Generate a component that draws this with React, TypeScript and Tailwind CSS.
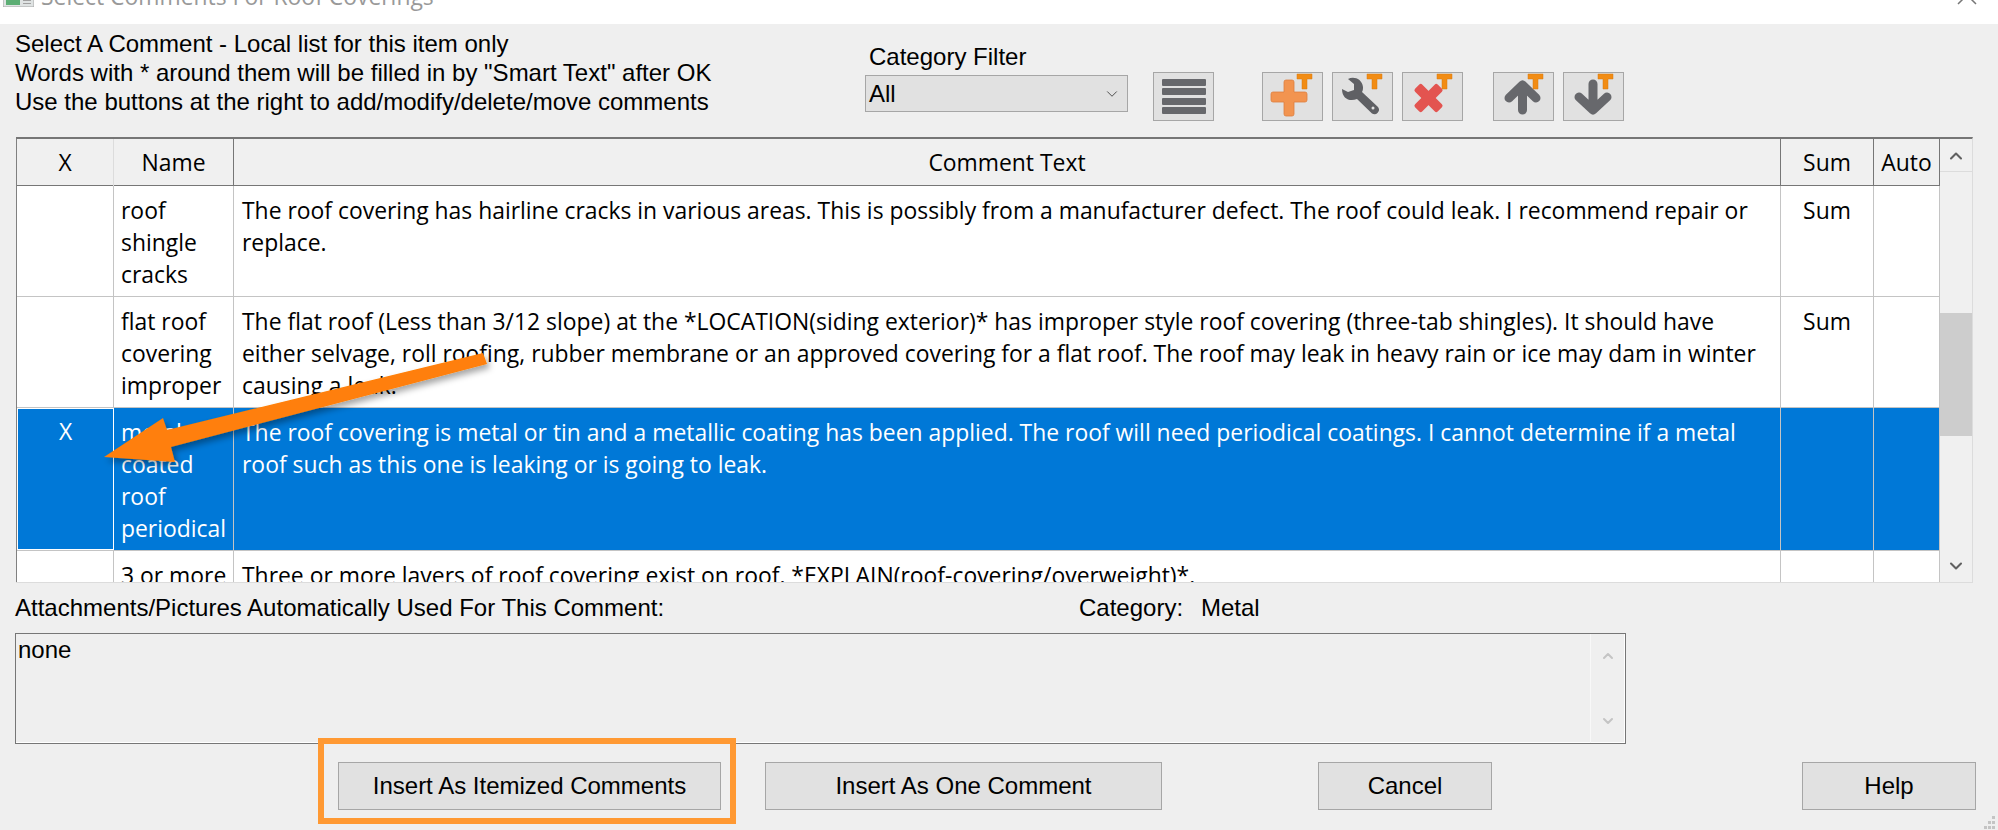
import { ChevronDown, ChevronUp } from "lucide-react";

// Comment picker dialog, table rows carry their own heights so the list clips like the real grid.
const UI_FONT = "font-['Liberation_Sans',Arial,sans-serif]";
const GRID_FONT = "font-['Open_Sans','Noto_Sans',sans-serif]";

interface Row {
  mark?: string;
  name: string[];
  text: string[];
  sum?: string;
  height: string;
  selected?: boolean;
}

const ROWS: Row[] = [
  {
    name: ["roof", "shingle", "cracks"],
    text: [
      "The roof covering has hairline cracks in various areas. This is possibly from a manufacturer defect. The roof could leak. I recommend repair or",
      "replace.",
    ],
    sum: "Sum",
    height: "h-[111px]",
  },
  {
    name: ["flat roof", "covering", "improper"],
    text: [
      "The flat roof (Less than 3/12 slope) at the *LOCATION(siding exterior)* has improper style roof covering (three-tab shingles). It should have",
      "either selvage, roll roofing, rubber membrane or an approved covering for a flat roof. The roof may leak in heavy rain or ice may dam in winter",
      "causing a leak.",
    ],
    sum: "Sum",
    height: "h-[111px]",
  },
  {
    mark: "X",
    name: ["metal", "coated", "roof", "periodical"],
    text: [
      "The roof covering is metal or tin and a metallic coating has been applied. The roof will need periodical coatings. I cannot determine if a metal",
      "roof such as this one is leaking or is going to leak.",
    ],
    height: "h-[143px]",
    selected: true,
  },
  {
    name: ["3 or more", "layers"],
    text: ["Three or more layers of roof covering exist on roof. *EXPLAIN(roof-covering/overweight)*."],
    height: "h-[111px]",
  },
];

const COLS = "grid grid-cols-[97px_120px_1547px_93px_66px]";

function ToolIcon({ children }: { children: React.ReactNode }) {
  return (
    <button className="h-[49px] w-[61px] shrink-0 border border-[#a6a6a6] bg-[#e1e1e1]">
      <svg viewBox="0 0 61 49" className="-m-[1px] block h-[49px] w-[61px]">
        {children}
        <path d="M35 2h15v5h-5v10h-5V7h-5z" fill="#f28c13" stroke="#d67a10" strokeWidth="0.5" />
      </svg>
    </button>
  );
}

function DialogButton({ label, className }: { label: string; className: string }) {
  return (
    <button className={`h-[48px] shrink-0 border border-[#a6a6a6] bg-[#e1e1e1] text-[24px] text-black ${className}`}>
      {label}
    </button>
  );
}

export default function App() {
  return (
    <div className={`relative flex h-[830px] w-[1998px] flex-col overflow-hidden bg-[#efefef] text-black ${UI_FONT}`}>
      {/* title bar, cut off by the top of the capture */}
      <div className="flex h-[24px] shrink-0 items-start justify-between overflow-hidden bg-white pl-[3px] pr-[21px]">
        <div className="flex items-start gap-[7px]">
          <svg width="31" height="20" viewBox="0 0 31 20" className="-mt-[13px] shrink-0">
            <rect x="0" y="0" width="31" height="20" fill="#dfe3e3" stroke="#a8a8a8" />
            <rect x="3" y="0" width="14" height="18" fill="#5cae74" />
            <rect x="20" y="13" width="8" height="1" fill="#a0a0a0" />
            <rect x="20" y="16" width="8" height="1" fill="#a0a0a0" />
          </svg>
          <span className={`-mt-[19px] text-[22.9px] leading-[32px] text-[#999] ${GRID_FONT}`}>Select Comments For Roof Coverings</span>
        </div>
        <svg width="20" height="20" viewBox="0 0 20 20" className="-mt-[15px] shrink-0" stroke="#777" strokeWidth="1.5" fill="none">
          <path d="M1 1L19 19M19 1L1 19" />
        </svg>
      </div>

      {/* instructions + toolbar */}
      <div className="flex h-[113px] shrink-0 pl-[15px]">
        <div className="w-[850px] whitespace-nowrap pt-[5px] text-[24px] leading-[29px]">
          <div>Select A Comment - Local list for this item only</div>
          <div>Words with * around them will be filled in by "Smart Text" after OK</div>
          <div>Use the buttons at the right to add/modify/delete/move comments</div>
        </div>
        <div className="w-[288px] pt-[19px]">
          <div className="pl-[4px] text-[24px] leading-[27px]">Category Filter</div>
          <div className="mt-[5px] flex h-[37px] w-[263px] items-center justify-between border border-[#a6a6a6] bg-[#e1e1e1] pl-[3px] pr-[6px] text-[24px]">
            All
            <ChevronDown className="h-[18px] w-[18px] text-[#444]" strokeWidth={1.25} />
          </div>
        </div>
        <div className="flex pt-[48px]">
          <button className="flex h-[49px] w-[61px] flex-col items-center justify-center gap-[2.5px] border border-[#a6a6a6] bg-[#e1e1e1]">
            <span className="h-[7px] w-[44px] rounded-[1px] bg-[#67686c]" />
            <span className="h-[7px] w-[44px] rounded-[1px] bg-[#67686c]" />
            <span className="h-[7px] w-[44px] rounded-[1px] bg-[#67686c]" />
            <span className="h-[7px] w-[44px] rounded-[1px] bg-[#67686c]" />
          </button>
          <div className="ml-[48px] flex gap-[9px]">
            <ToolIcon>
              <path d="M24 8h6a2 2 0 0 1 2 2v10h11a2 2 0 0 1 2 2v6a2 2 0 0 1-2 2H32v12a2 2 0 0 1-2 2h-6a2 2 0 0 1-2-2V30H11a2 2 0 0 1-2-2v-6a2 2 0 0 1 2-2h11V10a2 2 0 0 1 2-2z" fill="#f29450" stroke="#dd7f3f" strokeWidth="0.8" />
            </ToolIcon>
            <ToolIcon>
              <path d="M16 7C22 4 30 7 31 15C31 17 31 18 30 20L46 35a4.5 4.5 0 0 1-6 6.5L25 27C18 30 10 27 10 17L16 20L22 18L22 12z" fill="#5f6064" />
              <circle cx="41" cy="36" r="1.5" fill="#e1e1e1" />
            </ToolIcon>
            <ToolIcon>
              <rect x="10.5" y="21" width="32" height="10" rx="2" fill="#e35450" transform="rotate(45 26.5 26)" />
              <rect x="10.5" y="21" width="32" height="10" rx="2" fill="#e35450" transform="rotate(-45 26.5 26)" />
            </ToolIcon>
          </div>
          <div className="ml-[30px] flex gap-[9px]">
            <ToolIcon>
              <path d="M29.5 38V15M16 26L29.5 13L43 26" fill="none" stroke="#67686c" strokeWidth="9" strokeLinecap="round" strokeLinejoin="round" />
            </ToolIcon>
            <ToolIcon>
              <path d="M30 12V36M16 25L30 38L44 25" fill="none" stroke="#67686c" strokeWidth="9" strokeLinecap="round" strokeLinejoin="round" />
            </ToolIcon>
          </div>
        </div>
      </div>

      {/* comment grid */}
      <div className="ml-[16px] flex h-[446px] w-[1957px] shrink-0 border-t-2 border-r border-b border-t-[#767676] border-r-[#dcdcdc] border-b-[#dcdcdc]">
        <div className={`h-full w-[1924px] shrink-0 overflow-hidden border-l border-[#808080] bg-white ${GRID_FONT}`}>
          <div className={`${COLS} h-[47px] border-b border-[#767676] bg-[#f0f0f0] text-[22.9px] leading-[48px]`}>
            <div className="border-r border-[#dcdcdc] text-center">X</div>
            <div className="border-r border-[#767676] text-center">Name</div>
            <div className="border-r border-[#767676] text-center">Comment Text</div>
            <div className="border-r border-[#767676] text-center">Sum</div>
            <div className="border-r border-[#767676] text-center">Auto</div>
          </div>
          {ROWS.map((r) => (
            <div
              key={r.name[0]}
              className={`${COLS} ${r.height} border-b border-[#c4c4c4] text-[22.9px] leading-[32px] ${r.selected ? "bg-[#0078d7] text-white" : "text-black"}`}
            >
              <div className={`text-center ${r.selected ? "border border-white pt-[7px]" : "border-r border-[#c4c4c4] pt-[9px]"}`}>{r.mark}</div>
              <div className="whitespace-nowrap border-r border-[#c4c4c4] pt-[9px] pl-[7px]">
                {r.name.map((l) => (
                  <div key={l}>{l}</div>
                ))}
              </div>
              <div className="whitespace-nowrap border-r border-[#c4c4c4] pt-[9px] pl-[8px]">
                {r.text.map((l) => (
                  <div key={l}>{l}</div>
                ))}
              </div>
              <div className="border-r border-[#c4c4c4] pt-[9px] text-center">{r.sum}</div>
              <div className="border-r border-[#c4c4c4]" />
            </div>
          ))}
        </div>
        <div className="flex h-full w-[32px] flex-col bg-[#f0f0f0]">
          <div className="flex h-[33px] items-center justify-center border-b border-[#dcdcdc] pt-[2px]">
            <ChevronUp className="h-[20px] w-[20px] text-[#606060]" strokeWidth={2.5} />
          </div>
          <div className="flex-1 pt-[141px]">
            <div className="h-[123px] bg-[#cdcdcd]" />
          </div>
          <div className="flex h-[33px] items-center justify-center">
            <ChevronDown className="h-[20px] w-[20px] text-[#606060]" strokeWidth={2.5} />
          </div>
        </div>
      </div>

      {/* attachments */}
      <div className="flex h-[50px] shrink-0 items-center pl-[15px] text-[24px]">
        <span className="w-[1064px]">Attachments/Pictures Automatically Used For This Comment:</span>
        <span className="w-[122px]">Category:</span>
        <span>Metal</span>
      </div>
      <div className="ml-[15px] flex h-[111px] w-[1611px] shrink-0 border border-[#767676] text-[24px] shadow-[inset_-1px_-1px_0_#fff]">
        <div className="flex-1 pl-[2px] pt-[2px] leading-[28px]">none</div>
        <div className="flex w-[35px] flex-col items-center justify-between border-l border-[#f8f8f8] py-[14px] text-[#c4c4c4]">
          <ChevronUp className="h-[16px] w-[16px]" strokeWidth={3} />
          <ChevronDown className="h-[16px] w-[16px]" strokeWidth={3} />
        </div>
      </div>

      {/* dialog buttons */}
      <div className="flex pl-[338px] pt-[18px]">
        <DialogButton label="Insert As Itemized Comments" className="w-[383px]" />
        <DialogButton label="Insert As One Comment" className="ml-[44px] w-[397px]" />
        <DialogButton label="Cancel" className="ml-[156px] w-[174px]" />
        <DialogButton label="Help" className="ml-[310px] w-[174px]" />
      </div>

      {/* annotation overlays */}
      <div className="absolute left-[318px] top-[738px] h-[86px] w-[418px] border-[6px] border-[#ff9933]" />
      <svg className="absolute left-0 top-0 h-[830px] w-[1998px]" viewBox="0 0 1998 830">
        <defs>
          <filter id="shade" x="-10%" y="-20%" width="120%" height="140%">
            <feDropShadow dx="3" dy="4" stdDeviation="3" floodColor="#000" floodOpacity="0.35" />
          </filter>
        </defs>
        <path d="M483 353L487 364L171 447L175 462L104 457L163 418L167 430z" fill="#ff7f07" filter="url(#shade)" />
      </svg>

      {/* resize grip */}
      <svg className="absolute bottom-0 right-0" width="16" height="16" viewBox="0 0 16 16" fill="#c4c4c4">
        <rect x="10" y="2" width="3" height="3" />
        <rect x="6" y="7" width="3" height="3" />
        <rect x="10" y="7" width="3" height="3" />
        <rect x="2" y="12" width="3" height="3" />
        <rect x="6" y="12" width="3" height="3" />
        <rect x="10" y="12" width="3" height="3" />
      </svg>
    </div>
  );
}
